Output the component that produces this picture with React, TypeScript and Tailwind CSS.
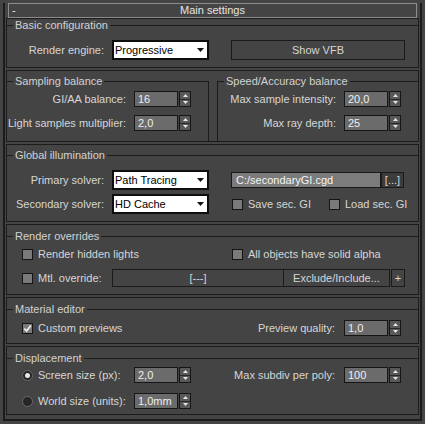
import React from "react";

type Kids = { children?: React.ReactNode; className?: string };

function Section({ children, className = "" }: Kids) {
  return <div className={`mx-[1px] border border-[#1c1c1c] ${className}`}>{children}</div>;
}

function Group({ title, children, className = "" }: Kids & { title: string }) {
  return (
    <fieldset className={`border-t border-[#1c1c1c] ${className}`}>
      <legend className="ml-[6px] px-[2px] leading-[12px] text-[#d2d2d2]">{title}</legend>
      {children}
    </fieldset>
  );
}

function Arrow({ down = false, fill = "#111", w = 7, h = 4 }: { down?: boolean; fill?: string; w?: number; h?: number }) {
  const d = down ? `M0 0 L${w} 0 L${w / 2} ${h} Z` : `M0 ${h} L${w} ${h} L${w / 2} 0 Z`;
  return (
    <svg width={w} height={h} viewBox={`0 0 ${w} ${h}`}>
      <path d={d} fill={fill} />
    </svg>
  );
}

function Spinner({ value, className = "" }: { value: string; className?: string }) {
  return (
    <div className={`flex items-center h-[16px] ${className}`}>
      <div className="w-[44px] h-full border border-[#161616] bg-[#6b6b6b] text-[#eeeeee] pl-[3px] flex items-center leading-none">
        {value}
      </div>
      <div className="ml-[1px] w-[12px] h-full border border-[#161616] bg-[#585858] flex flex-col">
        <div className="flex-1 flex items-center justify-center border-b border-[#2a2a2a]">
          <Arrow fill="#e6e6e6" w={5} h={3} />
        </div>
        <div className="flex-1 flex items-center justify-center">
          <Arrow down fill="#e6e6e6" w={5} h={3} />
        </div>
      </div>
    </div>
  );
}

function Dropdown({ value, className = "" }: { value: string; className?: string }) {
  return (
    <div
      className={`w-[97px] h-[20px] border-2 border-[#0e0e0e] bg-white text-black pl-[1px] pr-[3px] flex items-center justify-between leading-none ${className}`}
    >
      <span>{value}</span>
      <Arrow down />
    </div>
  );
}

function Check({ label, checked = false, className = "" }: { label: string; checked?: boolean; className?: string }) {
  return (
    <div className={`flex items-center ${className}`}>
      <span className="w-[11px] h-[11px] border border-[#141414] bg-[#7a7a7a] flex items-center justify-center shrink-0">
        {checked && (
          <svg width="9" height="9" viewBox="0 0 9 9">
            <path d="M1.3 4.6 L3.6 7 L7.8 1.6" stroke="#f2f2f2" strokeWidth="1.7" fill="none" />
          </svg>
        )}
      </span>
      <span className="ml-[5px] whitespace-nowrap">{label}</span>
    </div>
  );
}

function Radio({ label, selected = false, className = "" }: { label: string; selected?: boolean; className?: string }) {
  return (
    <div className={`flex items-center ${className}`}>
      <span className="w-[11px] h-[11px] rounded-full border border-[#6a6a6a] bg-[#262626] flex items-center justify-center shrink-0">
        {selected && <span className="w-[5px] h-[5px] rounded-full bg-[#e8e8e8]" />}
      </span>
      <span className="ml-[5px] whitespace-nowrap">{label}</span>
    </div>
  );
}

function SpinRow({ label, value, labelClass }: { label: string; value: string; labelClass: string }) {
  return (
    <div className="flex items-center h-[16px]">
      <span className={`${labelClass} text-right whitespace-nowrap`}>{label}</span>
      <Spinner value={value} className="ml-[8px]" />
    </div>
  );
}

export default function App() {
  return (
    <div className="w-[425px] h-[424px] bg-[#444444] pt-[10px] px-[3px] font-['Liberation_Sans',Arial,sans-serif] text-[11px] text-[#d6d6d6]">
      <div className="border-x-2 border-b-2 border-[#1c1c1c] pb-[4px]">
        {/* rollout header */}
        <div className="-mt-[7px] mx-[3px] h-[15px] border border-[#8c8c8c] flex items-center leading-none text-[#e4e4e4]">
          <span className="w-[20px] pl-[3px]">-</span>
          <span className="flex-1 text-center mr-[20px]">Main settings</span>
        </div>

        <div className="flex flex-col gap-[2px]">
          <Section className="h-[50px]">
            <Group title="Basic configuration">
              <div className="mt-[9px] flex items-center h-[20px]">
                <span className="w-[97px] text-right">Render engine:</span>
                <Dropdown value="Progressive" className="ml-[8px]" />
                <div className="ml-[22px] w-[174px] h-[20px] border border-[#1a1a1a] flex items-center justify-center">
                  Show VFB
                </div>
              </div>
            </Group>
          </Section>

          <Section className="h-[72px] flex">
            <Group title="Sampling balance" className="mt-[4px] w-[202px] border-r">
              <div className="mt-[4px] flex flex-col gap-[8px]">
                <SpinRow label="GI/AA balance:" value="16" labelClass="w-[119px]" />
                <SpinRow label="Light samples multiplier:" value="2,0" labelClass="w-[119px]" />
              </div>
            </Group>
            <Group title="Speed/Accuracy balance" className="mt-[4px] ml-[8px] flex-1 border-l">
              <div className="mt-[4px] flex flex-col gap-[8px]">
                <SpinRow label="Max sample intensity:" value="20,0" labelClass="w-[118px]" />
                <SpinRow label="Max ray depth:" value="25" labelClass="w-[118px]" />
              </div>
            </Group>
          </Section>

          <Section className="h-[78px]">
            <Group title="Global illumination" className="mt-[4px]">
              <div className="mt-[9px] flex flex-col gap-[4px]">
                <div className="flex items-center h-[20px]">
                  <span className="w-[97px] text-right">Primary solver:</span>
                  <Dropdown value="Path Tracing" className="ml-[8px]" />
                  <div className="ml-[22px] w-[150px] h-[16px] border border-[#1a1a1a] bg-[#7b7b7b] text-[#f4f4f4] pl-[4px] flex items-center leading-none">
                    C:/secondaryGI.cgd
                  </div>
                  <div className="w-[23px] h-[16px] border border-[#1a1a1a] bg-[#3c3c3c] flex items-center justify-center leading-none">
                    [...]
                  </div>
                </div>
                <div className="flex items-center h-[20px]">
                  <span className="w-[97px] text-right">Secondary solver:</span>
                  <Dropdown value="HD Cache" className="ml-[8px]" />
                  <Check label="Save sec. GI" className="ml-[23px] w-[97px]" />
                  <Check label="Load sec. GI" />
                </div>
              </div>
            </Group>
          </Section>

          <Section className="h-[71px]">
            <Group title="Render overrides" className="mt-[5px]">
              <div className="mt-[5px] flex items-center h-[14px]">
                <Check label="Render hidden lights" className="ml-[15px] w-[210px]" />
                <Check label="All objects have solid alpha" />
              </div>
              <div className="mt-[8px] flex items-center h-[18px]">
                <Check label="Mtl. override:" className="ml-[15px] w-[90px]" />
                <div className="w-[172px] h-full border border-[#1a1a1a] flex items-center justify-center leading-none">
                  [---]
                </div>
                <div className="w-[106px] h-full border-y border-r border-[#1a1a1a] flex items-center justify-center leading-none">
                  Exclude/Include...
                </div>
                <div className="ml-[1px] w-[14px] h-full border border-[#1a1a1a] flex items-center justify-center leading-none">
                  +
                </div>
              </div>
            </Group>
          </Section>

          <Section className="h-[47px]">
            <Group title="Material editor" className="mt-[5px]">
              <div className="mt-[5px] flex items-center h-[16px]">
                <Check label="Custom previews" checked className="ml-[15px] w-[169px]" />
                <span className="w-[144px] text-right">Preview quality:</span>
                <Spinner value="1,0" className="ml-[9px]" />
              </div>
            </Group>
          </Section>

          <Section className="h-[69px]">
            <Group title="Displacement" className="mt-[5px]">
              <div className="mt-[3px] flex flex-col gap-[10px]">
                <div className="flex items-center h-[16px]">
                  <Radio label="Screen size (px):" selected className="ml-[15px] w-[112px]" />
                  <Spinner value="2,0" />
                  <span className="w-[144px] text-right">Max subdiv per poly:</span>
                  <Spinner value="100" className="ml-[9px]" />
                </div>
                <div className="flex items-center h-[16px]">
                  <Radio label="World size (units):" className="ml-[15px] w-[112px]" />
                  <Spinner value="1,0mm" />
                </div>
              </div>
            </Group>
          </Section>
        </div>
      </div>
    </div>
  );
}
